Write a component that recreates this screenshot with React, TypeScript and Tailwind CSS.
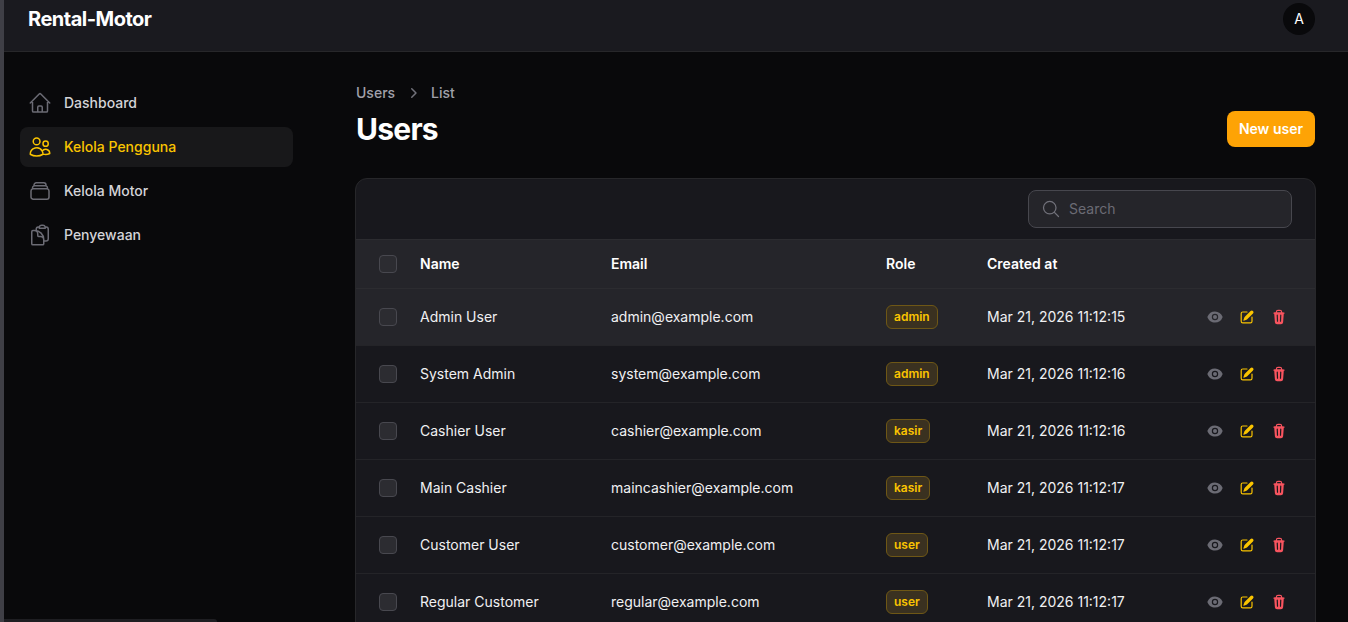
import {
  HiOutlineHome,
  HiOutlineUsers,
  HiOutlineRectangleStack,
  HiOutlineClipboardDocument,
  HiOutlineMagnifyingGlass,
  HiMiniEye,
  HiMiniPencilSquare,
  HiMiniTrash,
} from 'react-icons/hi2';

const navItems = [
  { label: 'Dashboard', icon: HiOutlineHome },
  { label: 'Kelola Pengguna', icon: HiOutlineUsers, active: true },
  { label: 'Kelola Motor', icon: HiOutlineRectangleStack },
  { label: 'Penyewaan', icon: HiOutlineClipboardDocument },
];

const users = [
  { name: 'Admin User', email: 'admin@example.com', role: 'admin', created: 'Mar 21, 2026 11:12:15' },
  { name: 'System Admin', email: 'system@example.com', role: 'admin', created: 'Mar 21, 2026 11:12:16' },
  { name: 'Cashier User', email: 'cashier@example.com', role: 'kasir', created: 'Mar 21, 2026 11:12:16' },
  { name: 'Main Cashier', email: 'maincashier@example.com', role: 'kasir', created: 'Mar 21, 2026 11:12:17' },
  { name: 'Customer User', email: 'customer@example.com', role: 'user', created: 'Mar 21, 2026 11:12:17' },
  { name: 'Regular Customer', email: 'regular@example.com', role: 'user', created: 'Mar 21, 2026 11:12:17' },
];

const rowGrid = 'grid grid-cols-[64px_191px_275px_101px_220px_1fr] items-center';

function Checkbox() {
  return <span className="ml-[23px] block h-[18px] w-[18px] rounded-[4px] border border-[#48484f] bg-[#2c2c31]" />;
}

export default function App() {
  return (
    <div className="flex h-[622px] w-[1348px] overflow-hidden bg-[#09090b] font-['Inter',sans-serif] text-white">
      {/* window edge */}
      <div className="w-1 shrink-0 bg-[#3f3f46]" />

      <div className="relative flex min-w-0 flex-1 flex-col">
        {/* Top bar */}
        <header className="flex h-[52px] shrink-0 items-start justify-between border-b border-[#27272a] bg-[#1a1a1f] pr-[33px] pl-6">
          <span className="mt-[5px] text-[20px] leading-[28px] font-bold tracking-[-0.5px]">Rental-Motor</span>
          <span className="mt-[3px] flex h-8 w-8 items-center justify-center rounded-full bg-[#09090b] text-sm">A</span>
        </header>

        <div className="flex min-h-0 flex-1">
          {/* Sidebar */}
          <aside className="flex w-[320px] shrink-0 flex-col gap-1 pt-[31px] pr-[31px] pl-4">
            {navItems.map((item) => (
              <a
                key={item.label}
                className={`flex h-10 items-center gap-3 rounded-lg px-2 text-sm font-medium ${
                  item.active ? 'bg-[#18181a] text-[#fac400]' : 'text-[#d4d4d8]'
                }`}
              >
                <item.icon className={`h-6 w-6 ${item.active ? 'text-[#fac400]' : 'text-[#6b6b74]'}`} />
                {item.label}
              </a>
            ))}
          </aside>

          {/* Main */}
          <main className="min-w-0 flex-1 pt-[31px] pr-[33px] pl-8">
            <div className="flex items-center gap-2 text-sm font-medium text-[#a1a1aa]">
              <span>Users</span>
              <svg viewBox="0 0 20 20" fill="currentColor" className="h-5 w-5 text-[#71717a]">
                <path
                  fillRule="evenodd"
                  d="M8.22 5.22a.75.75 0 0 1 1.06 0l4.25 4.25a.75.75 0 0 1 0 1.06l-4.25 4.25a.75.75 0 0 1-1.06-1.06L11.94 10 8.22 6.28a.75.75 0 0 1 0-1.06Z"
                  clipRule="evenodd"
                />
              </svg>
              <span>List</span>
            </div>

            <div className="mt-[8px] flex items-start justify-between">
              <h1 className="text-[30px] leading-[36px] font-bold tracking-[-0.75px]">Users</h1>
              <button className="h-9 rounded-lg bg-[#fea305] px-3 text-sm font-semibold text-white">New user</button>
            </div>

            {/* Table card */}
            <section className="mt-[31px] ml-[-1px] w-[961px] rounded-t-xl border border-[#27272a] bg-[#18181d]">
              <div className="flex h-[60px] items-center justify-end pr-[23px]">
                <div className="flex h-[38px] w-[264px] items-center gap-[8px] rounded-lg border border-[#47474e] bg-[#25252a] px-3">
                  <HiOutlineMagnifyingGlass className="h-5 w-5 text-[#71717a]" />
                  <span className="text-sm text-[#6b6b74]">Search</span>
                </div>
              </div>

              <div className={`${rowGrid} h-[50px] border-y border-[#2c2c30] bg-[#25252a] text-sm font-semibold`}>
                <Checkbox />
                <span>Name</span>
                <span>Email</span>
                <span>Role</span>
                <span>Created at</span>
              </div>

              {users.map((user, i) => (
                <div
                  key={user.email}
                  className={`${rowGrid} h-[57px] border-b border-[#242428] text-sm ${i === 0 ? 'bg-[#25252a]' : ''}`}
                >
                  <Checkbox />
                  <span className="text-[#f0f0f2]">{user.name}</span>
                  <span className="text-[#f0f0f2]">{user.email}</span>
                  <span>
                    <span className="inline-flex h-6 items-center rounded-md border border-[#6e5716] bg-[#3a3120] px-[7px] text-xs font-semibold text-[#fac400]">
                      {user.role}
                    </span>
                  </span>
                  <span className="text-[#f0f0f2]">{user.created}</span>
                  <span className="flex items-center gap-4">
                    <HiMiniEye className="h-4 w-4 text-[#6b6b74]" />
                    <HiMiniPencilSquare className="h-4 w-4 text-[#fac400]" />
                    <HiMiniTrash className="h-4 w-4 text-[#f8545f]" />
                  </span>
                </div>
              ))}
            </section>
          </main>
        </div>

        {/* horizontal scroll thumb */}
        <div className="absolute bottom-0 left-0 h-[3px] w-[213px] rounded-tr-sm bg-[#1e1e22]" />
      </div>
    </div>
  );
}
